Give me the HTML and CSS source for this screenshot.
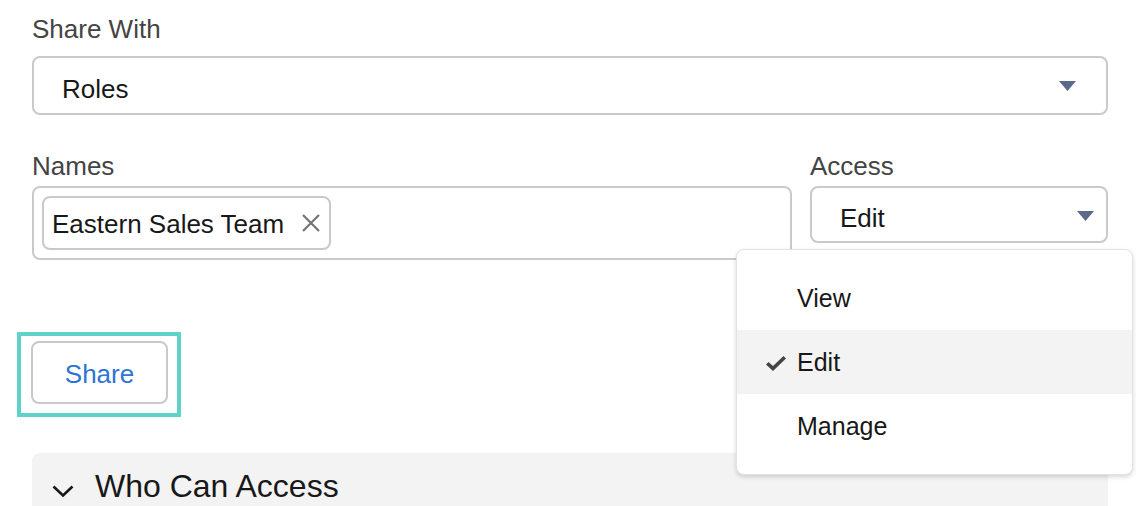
FILE: index.html
```html
<!DOCTYPE html>
<html lang="en">
<head>
    <meta charset="UTF-8">
    <title>Share</title>
    <link rel="stylesheet" href="styles.css">
</head>
<body>
    <div class="share-panel">
        <div class="field">
            <div class="field-label label-wide">Share With</div>
            <div class="select-box select-roles">
                <span class="select-value">Roles</span>
                <svg class="select-arrow" width="17" height="10" viewBox="0 0 17 10"><path d="M0 0 H17 L8.5 10 Z" fill="#5b6a8a"/></svg>
            </div>
        </div>

        <div class="field-row">
            <div class="field">
                <div class="field-label">Names</div>
                <div class="pill-box">
                    <span class="pill">
                        Eastern Sales Team
                        <svg class="pill-close" width="18" height="18" viewBox="0 0 18 18"><path d="M1 1 L17 17 M17 1 L1 17" stroke="#747474" stroke-width="2.2" fill="none"/></svg>
                    </span>
                </div>
            </div>
            <div class="field access-field">
                <div class="field-label">Access</div>
                <div class="select-box select-access">
                    <span class="select-value">Edit</span>
                    <svg class="select-arrow" width="17" height="10" viewBox="0 0 17 10"><path d="M0 0 H17 L8.5 10 Z" fill="#5b6a8a"/></svg>
                </div>

                <!-- open access menu -->
                <ul class="menu">
                    <li class="menu-item"><span class="menu-check"></span>View</li>
                    <li class="menu-item selected">
                        <span class="menu-check">
                            <svg width="22" height="17" viewBox="0 0 22 17"><path d="M1 9.5 L3.5 7 L8 11 L18.5 1 L21 3.5 L8 16 Z" fill="#444"/></svg>
                        </span>Edit
                    </li>
                    <li class="menu-item"><span class="menu-check"></span>Manage</li>
                </ul>
            </div>
        </div>

        <div class="share-actions">
            <div class="focus-ring">
                <button class="share-btn">Share</button>
            </div>
        </div>

        <div class="section-header">
            <svg class="chevron" width="22" height="12" viewBox="0 0 22 12"><path d="M1.5 1.5 L11 10.5 L20.5 1.5" stroke="#181818" stroke-width="2.6" fill="none"/></svg>
            <span>Who Can Access</span>
        </div>
    </div>
</body>
</html>
```

FILE: styles.css
```css
* {
    box-sizing: border-box;
    margin: 0;
    padding: 0;
}

body {
    font-family: 'Liberation Sans', Arial, sans-serif;
    background-color: #fff;
    color: #181818;
    overflow: hidden;
}

.share-panel {
    padding: 13px 28px 0 32px;
}

/* labels + inputs */
.field-label {
    font-size: 26px;
    line-height: 32px;
    color: #444;
    margin-bottom: 4px;
}
.label-wide {
    margin-bottom: 11px;
}
.select-box {
    display: flex;
    align-items: center;
    justify-content: space-between;
    border: 2px solid #c9c9c9;
    border-radius: 8px;
    background-color: #fff;
    font-size: 26px;
}
.select-roles {
    height: 59px;
    padding: 8px 30px 0 28px;
}
.select-access {
    height: 57px;
    padding: 7px 12px 0 28px;
}
.select-arrow {
    flex-shrink: 0;
}
.select-roles .select-arrow {
    margin-top: -8px;
}
.select-access .select-arrow {
    margin-top: -4px;
}

.field-row {
    display: grid;
    grid-template-columns: 1fr 298px;
    gap: 18px;
    margin-top: 35px;
}
.pill-box {
    border: 2px solid #c9c9c9;
    border-radius: 8px;
    height: 74px;
    padding: 8px;
}
.pill {
    display: inline-flex;
    align-items: center;
    gap: 18px;
    height: 54px;
    padding: 2px 9px 0 8px;
    border: 2px solid #c9c9c9;
    border-radius: 8px;
    font-size: 26px;
    line-height: 32px;
}
.pill-close {
    margin-top: -2px;
}

/* menu */
.access-field {
    position: relative;
    align-self: start;
}
.menu {
    position: absolute;
    top: calc(100% + 6px);
    right: -25px;
    width: 397px;
    list-style: none;
    padding: 16px 0;
    background-color: #fff;
    border: 1px solid #e3e3e3;
    border-radius: 8px;
    box-shadow: 0 2px 4px rgba(0,0,0,0.16);
    z-index: 2;
}
.menu-item {
    display: flex;
    align-items: center;
    height: 64px;
    padding-left: 28px;
    font-size: 25px;
    color: #181818;
}
.menu-item.selected {
    background-color: #f3f3f3;
}
.menu-check {
    display: inline-flex;
    width: 32px;
    padding-top: 2px;
}

/* share button */
.share-actions {
    margin-top: 72px;
}
.focus-ring {
    display: inline-block;
    margin-left: -15px;
    border: 4px solid #5fd3c9;
    padding: 5px 9px 9px 10px;
}
.share-btn {
    display: block;
    width: 137px;
    height: 63px;
    padding-top: 3px;
    border: 2px solid #c9c9c9;
    border-radius: 8px;
    background-color: #fff;
    color: #2e73d5;
    font-family: inherit;
    font-size: 26px;
}

/* who can access */
.section-header {
    display: flex;
    align-items: flex-start;
    margin-top: 36px;
    height: 70px;
    padding: 13px 0 0 20px;
    background-color: #f3f3f3;
    border-radius: 8px 8px 0 0;
    font-size: 32px;
    line-height: 40px;
}
.chevron {
    margin: 19px 21px 0 0;
}
```
